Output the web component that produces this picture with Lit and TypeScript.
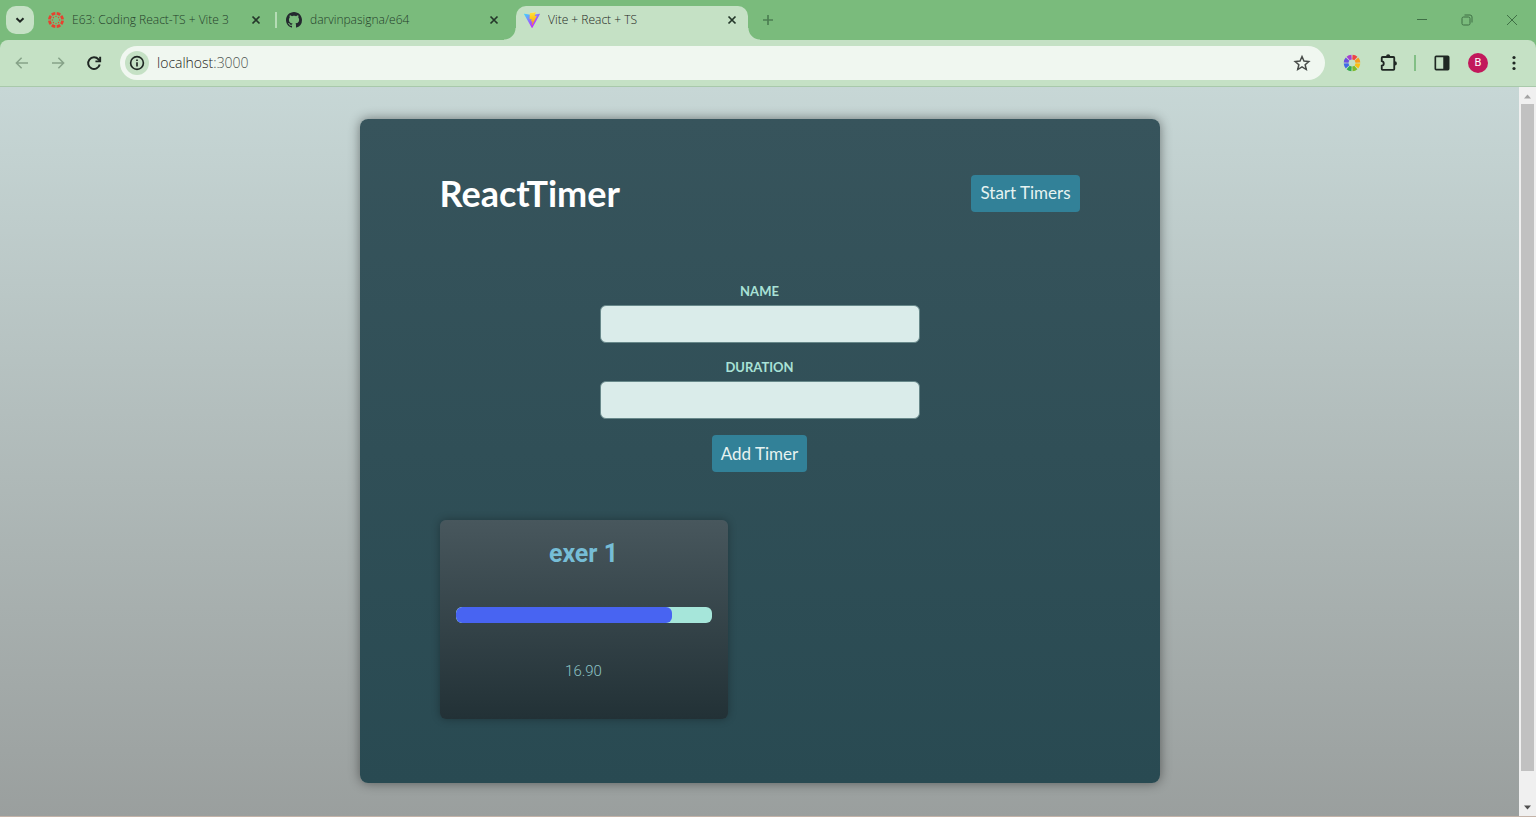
import { LitElement, html, css, svg, nothing } from "lit";
import { customElement, property, state } from "lit/decorators.js";
import { classMap } from "lit/directives/class-map.js";
import { styleMap } from "lit/directives/style-map.js";

const closeIcon = svg`<svg width="16" height="16" viewBox="0 0 16 16" fill="none" stroke="currentColor" stroke-width="1.7"><path d="M4.5 4.5l7 7M11.5 4.5l-7 7"/></svg>`;

const ring = (cx: number, cy: number, r: number, width: number, colors: string[], gap: number) => {
  const step = 360 / colors.length;
  const point = (deg: number) => {
    const a = (deg * Math.PI) / 180;
    return `${cx + r * Math.cos(a)} ${cy + r * Math.sin(a)}`;
  };
  return colors.map(
    (c, i) => svg`<path d="M${point(i * step + gap)}A${r} ${r} 0 0 1 ${point((i + 1) * step - gap)}" fill="none" stroke=${c} stroke-width=${width}/>`
  );
};

const canvasIcon = svg`<svg width="16" height="16" viewBox="0 0 16 16">
  ${ring(8, 8, 6.6, 2.8, Array(8).fill("#e8412f"), 6)}
  ${[0, 45, 90, 135, 180, 225, 270, 315].map(
    (a) => svg`<circle cx="11.6" cy="8" r="0.7" fill="#e8412f" transform="rotate(${a} 8 8)"/>`
  )}
</svg>`;

const githubIcon = svg`<svg width="16" height="16" viewBox="0 0 16 16" fill="#24292f"><path fill-rule="evenodd" d="M8 0C3.58 0 0 3.58 0 8c0 3.54 2.29 6.53 5.47 7.59.4.07.55-.17.55-.38 0-.19-.01-.82-.01-1.49-2.01.37-2.53-.49-2.69-.94-.09-.23-.48-.94-.82-1.13-.28-.15-.68-.52-.01-.53.63-.01 1.08.58 1.23.82.72 1.21 1.87.87 2.33.66.07-.52.28-.87.51-1.07-1.78-.2-3.64-.89-3.64-3.95 0-.87.31-1.59.82-2.15-.08-.2-.36-1.02.08-2.12 0 0 .67-.21 2.2.82.64-.18 1.32-.27 2-.27s1.36.09 2 .27c1.53-1.04 2.2-.82 2.2-.82.44 1.1.16 1.92.08 2.12.51.56.82 1.27.82 2.15 0 3.07-1.87 3.75-3.65 3.95.29.25.54.73.54 1.48 0 1.07-.01 1.93-.01 2.2 0 .21.15.46.55.38A8.01 8.01 0 0 0 16 8c0-4.42-3.58-8-8-8z"/></svg>`;

const viteIcon = svg`<svg width="16" height="16" viewBox="0 0 256 257">
  <defs>
    <linearGradient id="va" x1="-.8%" x2="57.6%" y1="7.7%" y2="78.4%"><stop offset="0" stop-color="#41D1FF"/><stop offset="1" stop-color="#BD34FE"/></linearGradient>
    <linearGradient id="vb" x1="43.4%" x2="50.3%" y1="2.2%" y2="89%"><stop offset="0" stop-color="#FFEA83"/><stop offset=".083" stop-color="#FFDD35"/><stop offset="1" stop-color="#FFA800"/></linearGradient>
  </defs>
  <path fill="url(#va)" d="M255.153 37.938L134.897 252.976c-2.483 4.44-8.862 4.466-11.382.048L.875 37.958c-2.746-4.814 1.371-10.646 6.827-9.67l120.385 21.517a6.537 6.537 0 0 0 2.322-.004l117.867-21.483c5.438-.991 9.574 4.796 6.877 9.62z"/>
  <path fill="url(#vb)" d="M185.432.063L96.44 17.501a3.268 3.268 0 0 0-2.634 3.014l-5.474 92.456a3.268 3.268 0 0 0 3.997 3.378l24.777-5.718c2.318-.535 4.413 1.507 3.936 3.838l-7.361 36.047c-.495 2.426 1.782 4.5 4.151 3.78l15.304-4.649c2.372-.72 4.652 1.36 4.15 3.788l-11.698 56.621c-.732 3.542 3.979 5.473 5.943 2.437l1.313-2.028 72.516-144.72c1.215-2.423-.88-5.186-3.54-4.672l-25.505 4.922c-2.396.462-4.435-1.77-3.759-4.114l16.646-57.705c.677-2.35-1.37-4.583-3.769-4.113z"/>
</svg>`;

const wheelIcon = svg`<svg width="18" height="18" viewBox="0 0 18 18">
  ${ring(9, 9, 5.9, 4.8, ["#fbbf12", "#7cbb2a", "#35a853", "#4169e8", "#6b4fe0", "#a63fd0", "#ef4444", "#f99b1c"], 4)}
</svg>`;

const icon = (size: number, body: unknown) =>
  svg`<svg width=${size} height=${size} viewBox="0 0 24 24" fill="none" stroke="currentColor" stroke-width="2">${body}</svg>`;

const backIcon = icon(18, svg`<path d="M20 12H4.500M11.500 5L4.500 12l7 7"/>`);
const forwardIcon = icon(18, svg`<path d="M4 12h15.500M12.500 5l7 7-7 7"/>`);
const reloadIcon = icon(18, svg`<path stroke-width="2.600" d="M19.600 14A7.800 7.800 0 1 1 18 7.200L20 9.300"/><path stroke-width="2.600" d="M20.200 3.500v6.300h-6.300"/>`);
const infoIcon = icon(18, svg`<circle cx="12" cy="12" r="8.500" stroke-width="2.200"/><path stroke-width="2.200" d="M12 11v5.500M12 7.200v2.200"/>`);
const starIcon = icon(18, svg`<path stroke-width="2" d="M12 3.400l2.600 6 6.500.6-4.900 4.300 1.500 6.400L12 17.300l-5.700 3.400 1.500-6.400L2.900 10l6.500-.6z"/>`);
const puzzleIcon = icon(20, svg`<path stroke-width="2.200" d="M5.500 4.800h13a1 1 0 0 1 1 1v13.400a1 1 0 0 1-1 1h-13a1 1 0 0 1-1-1v-3.900c3.200-.6 3.200-5 0-5.600V5.800a1 1 0 0 1 1-1z"/><path fill="currentColor" stroke="none" d="M9.700 4a2.500 2.500 0 0 1 5 0zM20.200 10a2.500 2.500 0 0 1 0 5z"/>`);
const panelIcon = icon(20, svg`<rect x="4" y="4" width="16" height="16" rx="1"/><path fill="currentColor" stroke="none" d="M13.500 4H20v16h-6.500z"/>`);
const menuIcon = svg`<svg width="18" height="18" viewBox="0 0 18 18" fill="currentColor"><circle cx="9" cy="3.500" r="1.600"/><circle cx="9" cy="9" r="1.600"/><circle cx="9" cy="14.500" r="1.600"/></svg>`;

interface Tab {
  title: string;
  icon: unknown;
  active?: boolean;
}

@customElement("browser-chrome")
class BrowserChrome extends LitElement {
  @state() private tabs: Tab[] = [
    { title: "E63: Coding React-TS + Vite 3", icon: canvasIcon },
    { title: "darvinpasigna/e64", icon: githubIcon },
    { title: "Vite + React + TS", icon: viteIcon, active: true },
  ];

  static styles = css`
    :host {
      display: block;
      flex: none;
      background: #7abb7c;
      color: #1f2723;
      font: 300 12px/16px "Open Sans", "Noto Sans", sans-serif;
    }
    button {
      display: flex;
      align-items: center;
      justify-content: center;
      flex: none;
      padding: 0;
      border: 0;
      background: none;
      color: inherit;
      font: inherit;
    }
    svg {
      display: block;
      flex: none;
    }
    .strip {
      display: flex;
      align-items: center;
      height: 40px;
      padding-left: 6px;
    }
    .search {
      width: 28px;
      height: 28px;
      margin-right: 6px;
      border-radius: 10px;
      background: #c5e1c5;
    }
    .tabs {
      display: flex;
      gap: 6px;
      align-self: stretch;
      padding-top: 6px;
    }
    .tab {
      position: relative;
      display: flex;
      align-items: center;
      gap: 8px;
      width: 232px;
      box-sizing: border-box;
      padding: 0 8px 6px;
      color: #25402b;
    }
    .tab button {
      width: 16px;
      height: 16px;
      color: #24372a;
    }
    .title {
      flex: 1;
      overflow: hidden;
      white-space: nowrap;
    }
    .divided::after {
      content: "";
      position: absolute;
      right: -5px;
      top: 6px;
      width: 2px;
      height: 16px;
      background: #b5dcb5;
    }
    .active {
      border-radius: 10px 10px 0 0;
      background: #c5e1c5;
      color: #1f2723;
    }
    .active::before,
    .active::after {
      content: "";
      position: absolute;
      bottom: 0;
      width: 12px;
      height: 12px;
    }
    .active::before {
      right: 100%;
      background: radial-gradient(circle at 0 0, transparent 11px, #c5e1c5 12px);
    }
    .active::after {
      left: 100%;
      background: radial-gradient(circle at 100% 0, transparent 11px, #c5e1c5 12px);
    }
    .new {
      width: 28px;
      height: 28px;
      margin-left: 6px;
      color: #4c7f52;
    }
    .window {
      display: flex;
      margin-left: auto;
      padding-right: 2px;
      color: #3f6f45;
    }
    .window button {
      width: 45px;
      height: 40px;
    }
    .bar {
      display: flex;
      align-items: center;
      box-sizing: border-box;
      height: 47px;
      padding: 0 4px;
      border-bottom: 1px solid #a9c9ab;
      border-radius: 8px 8px 0 0;
      background: #c5e1c5;
    }
    .tool {
      width: 36px;
      height: 36px;
    }
    .dim {
      color: #86a288;
    }
    .address {
      display: flex;
      flex: 1;
      align-items: center;
      height: 34px;
      margin: 0 9px 0 8px;
      padding: 0 5px;
      border-radius: 17px;
      background: #f0f7f0;
    }
    .info {
      width: 24px;
      height: 24px;
      border-radius: 50%;
      background: #c5e1c5;
    }
    .url {
      flex: 1;
      margin-left: 8px;
      font-size: 14px;
      line-height: 20px;
      color: #1f2420;
    }
    .port {
      color: #4f5650;
    }
    .star {
      color: #474b48;
    }
    .rule {
      width: 2px;
      height: 16px;
      margin: 0 8px;
      background: #82bf85;
    }
    .avatar {
      width: 20px;
      height: 20px;
      border-radius: 50%;
      background: #c2185b;
      color: #fff;
      font: 11px/20px Roboto, sans-serif;
      text-align: center;
    }
  `;

  render() {
    return html`
      <div class="strip">
        <button class="search" aria-label="Search tabs">
          <svg width="14" height="14" viewBox="0 0 14 14" fill="none" stroke="currentColor" stroke-width="2"><path d="M3.500 5.200L7 8.700l3.500-3.500" /></svg>
        </button>
        <div class="tabs">
          ${this.tabs.map(
            (t, i) => html`
              <div class=${classMap({ tab: true, active: !!t.active, divided: i === 0 })}>
                ${t.icon}<span class="title">${t.title}</span>
                <button aria-label="Close tab">${closeIcon}</button>
              </div>
            `
          )}
        </div>
        <button class="new" aria-label="New tab">
          <svg width="14" height="14" viewBox="0 0 14 14" fill="none" stroke="currentColor" stroke-width="1.700"><path d="M7 2v10M2 7h10" /></svg>
        </button>
        <div class="window">
          <button aria-label="Minimize">
            <svg width="12" height="12" viewBox="0 0 12 12" stroke="currentColor"><path d="M1 5.500h10" /></svg>
          </button>
          <button aria-label="Restore">
            <svg width="12" height="12" viewBox="0 0 12 12" fill="none" stroke="currentColor"><rect x="1" y="3" width="8" height="8" rx="1.500" /><path d="M3.500 1h5.500a2 2 0 0 1 2 2v5.500" /></svg>
          </button>
          <button aria-label="Close">
            <svg width="12" height="12" viewBox="0 0 12 12" stroke="currentColor"><path d="M1 1l10 10M11 1L1 11" /></svg>
          </button>
        </div>
      </div>
      <div class="bar">
        <button class="tool dim" aria-label="Back">${backIcon}</button>
        <button class="tool dim" aria-label="Forward">${forwardIcon}</button>
        <button class="tool" aria-label="Reload">${reloadIcon}</button>
        <div class="address">
          <button class="info" aria-label="Site information">${infoIcon}</button>
          <span class="url">localhost<span class="port">:3000</span></span>
          <button class="tool star" aria-label="Bookmark">${starIcon}</button>
        </div>
        <button class="tool" aria-label="Color wheel">${wheelIcon}</button>
        <button class="tool" aria-label="Extensions">${puzzleIcon}</button>
        <span class="rule"></span>
        <button class="tool" aria-label="Side panel">${panelIcon}</button>
        <button class="tool" aria-label="Profile"><span class="avatar">B</span></button>
        <button class="tool" aria-label="Menu">${menuIcon}</button>
      </div>
    `;
  }
}

@customElement("timer-card")
class TimerCard extends LitElement {
  @property() name = "";
  @property({ type: Number }) duration = 0;
  @property({ type: Number }) remaining = 0;

  static styles = css`
    :host {
      display: block;
      box-sizing: border-box;
      width: 288px;
      padding: 16px 16px 36px;
      border-radius: 6px;
      background: linear-gradient(#48575d, #223136);
      box-shadow: 0 0 8px rgba(0, 0, 0, 0.3);
      font-family: Roboto, sans-serif;
      text-align: center;
    }
    h2 {
      margin: 0 0 35px;
      color: #76bdd6;
      font-size: 25px;
      line-height: 36px;
      font-weight: 700;
    }
    .track {
      height: 16px;
      overflow: hidden;
      border-radius: 6px;
      background: #a6e6da;
    }
    .fill {
      height: 100%;
      border-radius: 6px;
      background: #4864f2;
    }
    p {
      margin: 36px 0 0;
      color: #8cc2c4;
      font-size: 15px;
      line-height: 24px;
      font-weight: 300;
    }
  `;

  render() {
    const width = this.duration ? (this.remaining / this.duration) * 100 : 0;
    return html`
      <h2>${this.name}</h2>
      <div class="track" role="progressbar" aria-label=${this.name}>
        <div class="fill" style=${styleMap({ width: `${width}%` })}></div>
      </div>
      <p>${this.remaining.toFixed(2)}</p>
    `;
  }
}

@customElement("app-root")
class AppRoot extends LitElement {
  @state() private timers = [{ name: "exer 1", duration: 20, remaining: 16.9 }];

  static styles = css`
    :host {
      display: flex;
      flex-direction: column;
      box-sizing: border-box;
      height: 100vh;
      overflow: hidden;
      border-bottom: 1px solid #c4b3a8;
      font-family: Lato, sans-serif;
    }
    .view {
      display: flex;
      flex: 1;
      min-height: 0;
    }
    .page {
      flex: 1;
      overflow: hidden;
      padding: 32px 16px;
      background: linear-gradient(#c7d7d6, #9a9f9e);
    }
    main {
      box-sizing: border-box;
      max-width: 800px;
      margin: 0 auto;
      padding: 48px 80px 64px;
      border-radius: 8px;
      background: linear-gradient(#37545c, #294a52);
      box-shadow: 0 0 12px rgba(0, 0, 0, 0.45);
    }
    header {
      display: flex;
      align-items: center;
      justify-content: space-between;
      height: 52px;
    }
    h1 {
      margin: 0;
      color: #fff;
      font-size: 36px;
      line-height: 40px;
    }
    .btn {
      height: 37px;
      padding: 0 9px;
      border: 0;
      border-radius: 4px;
      background: #328198;
      color: #e6f3f1;
      font: 17px/24px Lato, sans-serif;
    }
    form {
      display: flex;
      flex-direction: column;
      align-items: center;
      gap: 16px;
      max-width: 320px;
      margin: 64px auto 48px;
    }
    .field {
      display: flex;
      flex-direction: column;
      gap: 6px;
      width: 100%;
      text-align: center;
    }
    label {
      color: #a9e2d6;
      font-size: 13px;
      line-height: 16px;
      font-weight: 700;
      text-transform: uppercase;
    }
    input {
      box-sizing: border-box;
      width: 100%;
      height: 38px;
      padding: 0 8px;
      border: 1px solid #67888a;
      border-radius: 6px;
      background: #daecea;
      font: 16px/24px Lato, sans-serif;
    }
    .timers {
      display: flex;
      flex-wrap: wrap;
      gap: 32px;
    }
    .scroll {
      display: flex;
      flex: none;
      flex-direction: column;
      align-items: center;
      width: 17px;
      background: #f0f0f0;
    }
    .scroll svg {
      flex: none;
    }
    .rail {
      flex: 1;
      width: 13px;
    }
    .thumb {
      height: 96%;
      background: #c1c1c1;
    }
  `;

  private field(id: string, label: string) {
    return html`<div class="field">
      <label for=${id}>${label}</label>
      <input id=${id} name=${id} type="text" />
    </div>`;
  }

  render() {
    return html`
      <browser-chrome></browser-chrome>
      <div class="view">
        <div class="page">
          <main>
            <header>
              <h1>ReactTimer</h1>
              <button class="btn">Start Timers</button>
            </header>
            <form @submit=${(e: Event) => e.preventDefault()}>
              ${this.field("name", "Name")} ${this.field("duration", "Duration")}
              <button class="btn">Add Timer</button>
            </form>
            <div class="timers">
              ${this.timers.length
                ? this.timers.map(
                    (t) => html`<timer-card .name=${t.name} .duration=${t.duration} .remaining=${t.remaining}></timer-card>`
                  )
                : nothing}
            </div>
          </main>
        </div>
        <div class="scroll">
          <svg width="17" height="17" viewBox="0 0 17 17" fill="#a3a3a3"><path d="M5 11.500h7L8.500 7.500z" /></svg>
          <div class="rail"><div class="thumb"></div></div>
          <svg width="17" height="17" viewBox="0 0 17 17" fill="#505050"><path d="M5 6.500h7L8.500 10.500z" /></svg>
        </div>
      </div>
    `;
  }
}
